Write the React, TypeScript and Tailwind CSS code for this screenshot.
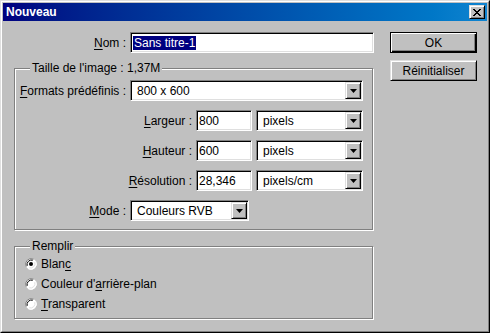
import type { ReactNode } from 'react'

/** Photoshop "Nouveau" dialog, Windows 98 classic chrome. */

const raised =
  'border border-t-[#dfdfdf] border-l-[#dfdfdf] border-r-black border-b-black shadow-[inset_1px_1px_0_#fff,inset_-1px_-1px_0_#808080]'
const sunken =
  'border border-t-[#808080] border-l-[#808080] border-r-white border-b-white shadow-[inset_1px_1px_0_#000,inset_-1px_-1px_0_#dfdfdf]'

function Key({ children }: { children: ReactNode }) {
  return <span className="underline underline-offset-[2px]">{children}</span>
}

function DropButton() {
  return (
    <div className={`flex h-[17px] w-[16px] shrink-0 items-center justify-center bg-[#c0c0c0] ${raised}`}>
      <svg width="7" height="4" viewBox="0 0 7 4" aria-hidden>
        <path d="M0 0h7L3.5 4z" fill="#000" />
      </svg>
    </div>
  )
}

function Select({ value, w }: { value: string; w: string }) {
  return (
    <div className={`flex h-[21px] shrink-0 items-center bg-white p-[1px] ${sunken} ${w}`}>
      <span className="flex-1 truncate pl-[5px] leading-none">{value}</span>
      <DropButton />
    </div>
  )
}

function Field({ value }: { value: string }) {
  return (
    <div className={`flex h-[21px] w-[56px] shrink-0 items-center bg-white pl-[2px] ${sunken}`}>
      <span className="leading-none">{value}</span>
    </div>
  )
}

function Label({ w, children }: { w: string; children: ReactNode }) {
  return <div className={`shrink-0 pr-[4px] text-right ${w}`}>{children}</div>
}

function Group({ title, h, children }: { title: string; h: string; children: ReactNode }) {
  return (
    <div
      className={`relative w-[359px] border border-[#808080] shadow-[inset_1px_1px_0_#fff,1px_1px_0_#fff] ${h}`}
    >
      <span className="absolute left-[15px] top-[-8px] bg-[#c0c0c0] px-[2px] leading-[14px]">{title}</span>
      {children}
    </div>
  )
}

function Radio({ checked, children }: { checked?: boolean; children: ReactNode }) {
  return (
    <div className="flex h-[20px] items-center gap-[4px] pl-[10px]">
      <svg width="12" height="12" viewBox="0 0 12 12" aria-hidden>
        <circle cx="6" cy="6" r="5.5" fill="#fff" />
        <path d="M1.2 8.6A5.5 5.5 0 0 1 8.6 1.2" stroke="#808080" strokeWidth="1" fill="none" />
        <path d="M2.2 7.8A4.5 4.5 0 0 1 7.8 2.2" stroke="#000" strokeWidth="1" fill="none" />
        <path d="M3.4 10.8A5.5 5.5 0 0 0 10.8 3.4" stroke="#fff" strokeWidth="1" fill="none" />
        <path d="M4.2 9.8A4.5 4.5 0 0 0 9.8 4.2" stroke="#dfdfdf" strokeWidth="1" fill="none" />
        {checked && <circle cx="6" cy="6" r="2" fill="#000" />}
      </svg>
      <span>{children}</span>
    </div>
  )
}

function Button({ children, primary }: { children: ReactNode; primary?: boolean }) {
  const cls = primary
    ? 'border border-black shadow-[inset_1px_1px_0_#fff,inset_-1px_-1px_0_#000,inset_-2px_-2px_0_#808080]'
    : raised
  return <div className={`flex h-[21px] w-[87px] items-center justify-center bg-[#c0c0c0] ${cls}`}>{children}</div>
}

export default function App() {
  return (
    <div className="h-[333px] w-[490px] bg-[#c0c0c0] font-['Liberation_Sans',Arial,sans-serif] text-[12px] text-black">
      <div className="h-full w-full border border-t-[#dfdfdf] border-l-[#dfdfdf] border-r-black border-b-black">
        <div className="flex h-full w-full flex-col border border-t-white border-l-white border-r-[#808080] border-b-[#808080] p-[1px]">
          {/* Title bar */}
          <div className="flex h-[18px] shrink-0 items-center bg-gradient-to-r from-[#000080] to-[#1084d0] pl-[3px] pr-[2px]">
            <span className="flex-1 font-bold text-white">Nouveau</span>
            <div className={`flex h-[14px] w-[16px] items-center justify-center bg-[#c0c0c0] ${raised}`}>
              <svg width="8" height="7" viewBox="0 0 8 7" aria-hidden shapeRendering="crispEdges">
                <path d="M0 0h2v1H0zM6 0h2v1H6zM1 1h2v1H1zM5 1h2v1H5zM2 2h4v1H2zM3 3h2v1H3zM2 4h4v1H2zM1 5h2v1H1zM5 5h2v1H5zM0 6h2v1H0zM6 6h2v1H6z" fill="#000" />
              </svg>
            </div>
          </div>

          {/* Body */}
          <div className="flex flex-1 pl-[11px] pt-[11px]">
            <div className="flex w-[360px] flex-col">
              <div className="flex h-[21px] items-center">
                <Label w="w-[116px]">
                  <Key>N</Key>om :
                </Label>
                <div className={`flex h-[21px] w-[245px] items-center bg-white pl-[2px] ${sunken}`}>
                  <span className="bg-[#000080] px-[1px] leading-[14px] text-white">Sans titre-1</span>
                </div>
              </div>

              <div className="mt-[15px]">
                <Group title="Taille de l'image : 1,37M" h="h-[162px]">
                  <div className="flex flex-col gap-[9px] pt-[11px]">
                    <div className="flex items-center">
                      <Label w="w-[115px]">
                        <Key>F</Key>ormats prédéfinis :
                      </Label>
                      <Select value="800 x 600" w="w-[233px]" />
                    </div>
                    <div className="flex items-center">
                      <Label w="w-[181px]">
                        <Key>L</Key>argeur :
                      </Label>
                      <Field value="800" />
                      <div className="ml-[4px]">
                        <Select value="pixels" w="w-[107px]" />
                      </div>
                    </div>
                    <div className="flex items-center">
                      <Label w="w-[181px]">
                        <Key>H</Key>auteur :
                      </Label>
                      <Field value="600" />
                      <div className="ml-[4px]">
                        <Select value="pixels" w="w-[107px]" />
                      </div>
                    </div>
                    <div className="flex items-center">
                      <Label w="w-[181px]">
                        <Key>R</Key>ésolution :
                      </Label>
                      <Field value="28,346" />
                      <div className="ml-[4px]">
                        <Select value="pixels/cm" w="w-[107px]" />
                      </div>
                    </div>
                    <div className="flex items-center">
                      <Label w="w-[115px]">
                        <Key>M</Key>ode :
                      </Label>
                      <Select value="Couleurs RVB" w="w-[119px]" />
                    </div>
                  </div>
                </Group>
              </div>

              <div className="mt-[16px]">
                <Group title="Remplir" h="h-[73px]">
                  <div className="flex flex-col pt-[7px]">
                    <Radio checked>
                      Blan<Key>c</Key>
                    </Radio>
                    <Radio>
                      Couleur d'<Key>a</Key>rrière-plan
                    </Radio>
                    <Radio>
                      <Key>T</Key>ransparent
                    </Radio>
                  </div>
                </Group>
              </div>
            </div>

            <div className="ml-[16px] flex flex-col gap-[7px]">
              <Button primary>OK</Button>
              <Button>Réinitialiser</Button>
            </div>
          </div>
        </div>
      </div>
    </div>
  )
}
